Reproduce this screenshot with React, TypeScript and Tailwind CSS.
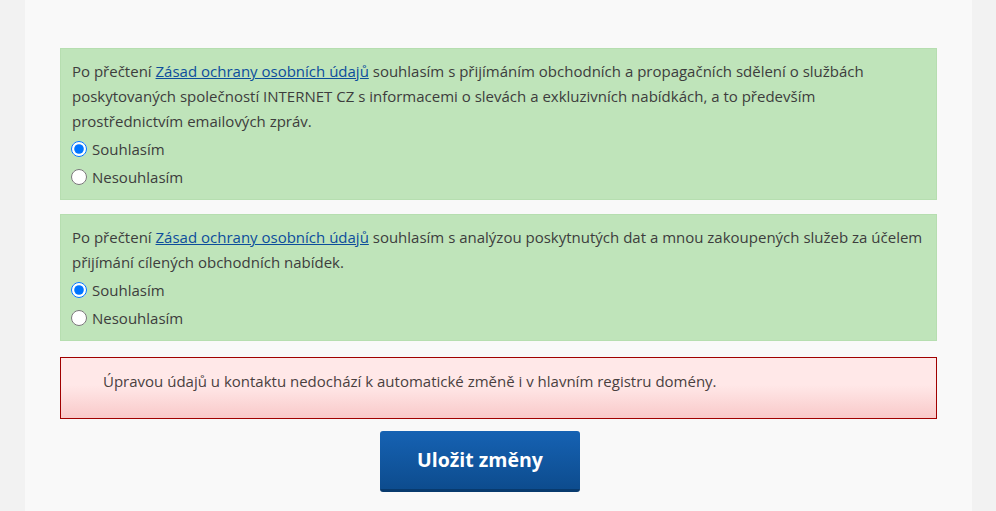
import React from "react";

function Radio({ checked, label, name }: { checked?: boolean; label: string; name: string }) {
  return (
    <label className="flex items-center h-[28px]">
      <input type="radio" name={name} defaultChecked={checked} className="m-0 ml-[-1px] mr-[5px] w-[16px] h-[16px]" />
      <span>{label}</span>
    </label>
  );
}

function Consent({ name, text }: { name: string; text: string }) {
  return (
    <div className="bg-[#bfe4ba] border border-[#b6deb0] px-[11px] pt-[10px] pb-[8px]">
      <p className="leading-[25px]">
        Po přečtení{" "}
        <a href="#" className="text-[#0c4d9c] underline">
          Zásad ochrany osobních údajů
        </a>{" "}
        {text}
      </p>
      <div className="mt-[1px]">
        <Radio name={name} checked label="Souhlasím" />
        <Radio name={name} label="Nesouhlasím" />
      </div>
    </div>
  );
}

export default function App() {
  return (
    <div className="min-h-[511px] bg-[#f2f2f2] flex justify-center" style={{ fontFamily: '"Open Sans", sans-serif' }}>
      <div className="w-[947px] ml-[1px] bg-[#f9f9f9] px-[35px] pt-[48px] pb-[20px] text-[15px] text-[#3d3d3d]">
        <div className="flex flex-col gap-[14px]">
          <Consent
            name="a"
            text="souhlasím s přijímáním obchodních a propagačních sdělení o službách poskytovaných společností INTERNET CZ s informacemi o slevách a exkluzivních nabídkách, a to především prostřednictvím emailových zpráv."
          />
          <Consent
            name="b"
            text="souhlasím s analýzou poskytnutých dat a mnou zakoupených služeb za účelem přijímání cílených obchodních nabídek."
          />
          <div className="mt-[2px] h-[62px] border border-[#a00000] bg-[linear-gradient(to_bottom,#ffe8e8_0%,#ffe8e8_45%,#f9c9c9_100%)] pl-[42px] pt-[11px] leading-[25px] text-[#4a3f3f]">
            Úpravou údajů u kontaktu nedochází k automatické změně i v hlavním registru domény.
          </div>
          <div className="flex pl-[320px] mt-[-2px]">
            <button className="w-[200px] h-[61px] rounded-[3px] bg-[linear-gradient(to_bottom,#1662b3,#0d4c8e)] border-b-[3px] border-[#083a6e] text-white font-bold text-[19.5px]">
              Uložit změny
            </button>
          </div>
        </div>
      </div>
    </div>
  );
}
